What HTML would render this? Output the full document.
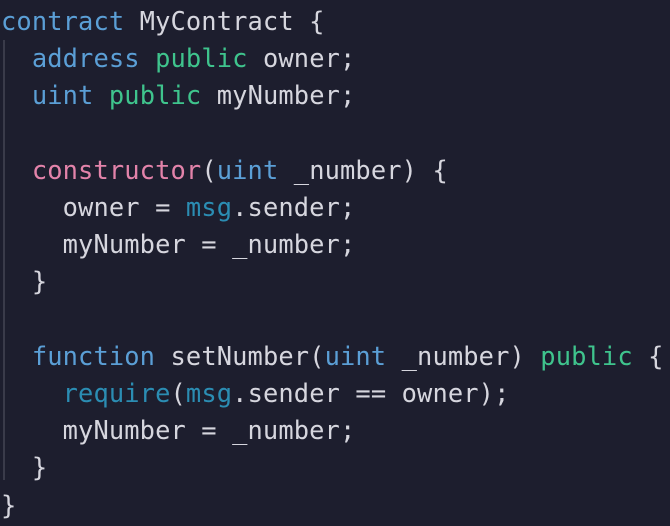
<!DOCTYPE html>
<html><head><style>
body{margin:0;background:#1d1e2e;width:670px;height:526px;overflow:hidden;position:relative}
pre{margin:0;position:absolute;left:1px;top:3px;font-family:"DejaVu Sans Mono","Liberation Mono",monospace;font-size:25.4px;letter-spacing:0.12px;line-height:37.2px;color:#d6d6de}
.k{color:#5b9fd6}.g{color:#3fc48d}.p{color:#e383aa}.t{color:#2b8db3}
.guide{position:absolute;left:3px;top:40px;width:2px;height:440px;background:#3a3b4a}
</style></head><body>
<div class="guide"></div>
<pre><span class="k">contract</span> MyContract {
  <span class="k">address</span> <span class="g">public</span> owner;
  <span class="k">uint</span> <span class="g">public</span> myNumber;

  <span class="p">constructor</span>(<span class="k">uint</span> _number) {
    owner = <span class="t">msg</span>.sender;
    myNumber = _number;
  }

  <span class="k">function</span> setNumber(<span class="k">uint</span> _number) <span class="g">public</span> {
    <span class="t">require</span>(<span class="t">msg</span>.sender == owner);
    myNumber = _number;
  }
}</pre>
</body></html>
